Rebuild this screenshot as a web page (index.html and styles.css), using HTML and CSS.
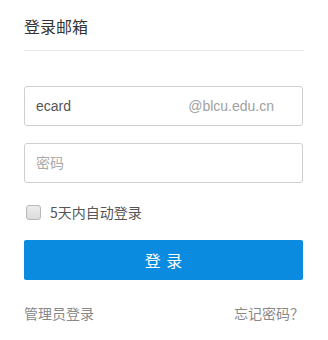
FILE: index.html
```html
<!DOCTYPE html>
<html lang="zh-CN">
<head>
<meta charset="utf-8">
<title>登录邮箱</title>
<link rel="stylesheet" href="styles.css">
</head>
<body>
<div class="panel">
  <div class="header">
    <h1 class="title">登录邮箱</h1>
  </div>
  <form class="form">
    <label class="field">
      <input class="field-input" type="text" value="ecard">
      <span class="field-suffix">@blcu.edu.cn</span>
    </label>
    <label class="field field-second">
      <input class="field-input" type="password" placeholder="密码">
    </label>
    <label class="remember">
      <span class="checkbox"></span>
      <span class="remember-text">5天内自动登录</span>
    </label>
    <button class="submit" type="button">登 录</button>
    <div class="links">
      <a class="link" href="#">管理员登录</a>
      <a class="link" href="#">忘记密码？</a>
    </div>
  </form>
</div>
</body>
</html>
```
FILE: styles.css
```css
html, body {
  margin: 0;
  padding: 0;
  background: #fff;
}
body {
  font-family: "Liberation Sans", "Noto Sans CJK SC", sans-serif;
}
.panel {
  width: 280px;
  padding: 0 24px;
}
.header {
  padding: 15px 0 13px;
  border-bottom: 1px solid #e6e6e6;
}
.title {
  margin: 0;
  font-size: 16px;
  line-height: 22px;
  font-weight: normal;
  color: #333;
  font-family: "Noto Sans CJK SC", sans-serif;
}
.form {
  display: flex;
  flex-direction: column;
  padding-top: 35px;
}
.field {
  display: flex;
  align-items: center;
  width: 277px;
  height: 38px;
  border: 1px solid #cfcfcf;
  border-radius: 3px;
  padding: 0;
}
.field-second {
  margin-top: 17px;
}
.field-input {
  flex: 1;
  min-width: 0;
  border: 0;
  outline: 0;
  padding: 0 0 0 11px;
  height: 38px;
  font-size: 14px;
  color: #555;
  background: transparent;
  font-family: "Liberation Sans", "Noto Sans CJK SC", sans-serif;
}
.field-input::placeholder {
  color: #aaa;
  font-family: "Noto Sans CJK SC", sans-serif;
}
.field-suffix {
  font-size: 14px;
  color: #a0a0a0;
  padding-right: 28px;
}
.remember {
  display: flex;
  align-items: center;
  margin-top: 19px;
  height: 20px;
  padding-left: 2px;
}
.checkbox {
  box-sizing: border-box;
  width: 15px;
  height: 15px;
  border: 1px solid #b8b8b8;
  border-radius: 3px;
  background: linear-gradient(#ececec, #dcdcdc);
}
.remember-text {
  margin-left: 9px;
  font-size: 14px;
  line-height: 20px;
  color: #555;
  font-family: "Noto Sans CJK SC", sans-serif;
}
.submit {
  margin-top: 18px;
  width: 279px;
  height: 40px;
  border: 0;
  border-radius: 2px;
  background: #0a8bdf;
  color: #fff;
  font-size: 16px;
  word-spacing: 2px;
  font-family: "Noto Sans CJK SC", sans-serif;
  padding: 0;
}
.links {
  display: flex;
  justify-content: space-between;
  margin-top: 23px;
  line-height: 20px;
}
.link {
  font-size: 14px;
  color: #888;
  text-decoration: none;
  font-family: "Noto Sans CJK SC", sans-serif;
}
```
